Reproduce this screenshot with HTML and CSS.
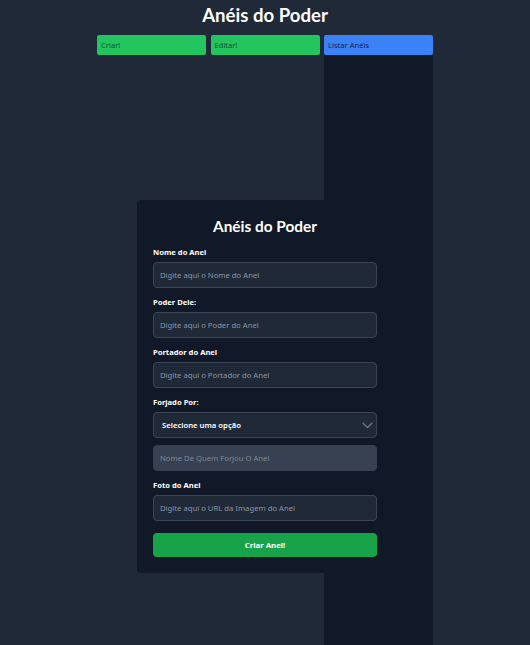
FILE: index.html
```html
<!DOCTYPE html>
<html lang="pt-BR">
<head>
<meta charset="utf-8">
<title>Anéis do Poder</title>
<link rel="stylesheet" href="styles.css">
</head>
<body>
  <h1 class="page-title">Anéis do Poder</h1>
  <div class="layout">
    <button class="tab tab-green">Criar!</button>
    <button class="tab tab-green">Editar!</button>
    <button class="tab tab-blue">Listar Anéis</button>
    <div class="list-panel"></div>
    <form class="card">
      <h2 class="card-title">Anéis do Poder</h2>
      <div class="field">
        <label class="label">Nome do Anel</label>
        <input class="input" type="text" placeholder="Digite aqui o Nome do Anel">
      </div>
      <div class="field">
        <label class="label">Poder Dele:</label>
        <input class="input" type="text" placeholder="Digite aqui o Poder do Anel">
      </div>
      <div class="field">
        <label class="label">Portador do Anel</label>
        <input class="input" type="text" placeholder="Digite aqui o Portador do Anel">
      </div>
      <div class="field field-select">
        <label class="label">Forjado Por:</label>
        <div class="select">
          <span>Selecione uma opção</span>
          <svg class="chevron" width="11" height="7" viewBox="0 0 11 7"><path d="M1 1.2 L5.5 5.5 L10 1.2" fill="none" stroke="#6b7280" stroke-width="1.5" stroke-linecap="round" stroke-linejoin="round"/></svg>
        </div>
      </div>
      <input class="input input-disabled" type="text" placeholder="Nome De Quem Forjou O Anel" disabled>
      <div class="field field-photo">
        <label class="label">Foto do Anel</label>
        <input class="input" type="text" placeholder="Digite aqui o URL da Imagem do Anel">
      </div>
      <button class="submit" type="button">Criar Anel!</button>
    </form>
  </div>
</body>
</html>
```
FILE: styles.css
```css
* { box-sizing: border-box; }
html, body { margin: 0; padding: 0; }
body {
  background: #1f2937;
  font-family: "Noto Sans", "Open Sans", sans-serif;
  color: #ffffff;
  min-height: 100vh;
  overflow: hidden;
}
.page-title {
  margin: 0;
  font-family: Lato, "Noto Sans", sans-serif;
  font-size: 18.6px;
  line-height: 30px;
  font-weight: 700;
  text-align: center;
}
.layout {
  width: 336px;
  margin: 5px auto 0;
  display: grid;
  grid-template-columns: repeat(3, 1fr);
  grid-template-rows: 20px auto;
  column-gap: 4.5px;
}
.tab {
  border: none;
  border-radius: 2px;
  height: 20px;
  padding: 0 4px;
  text-align: left;
  font-family: inherit;
  font-size: 7.6px;
  cursor: pointer;
}
.tab-green { background: #22c55e; color: #14532d; }
.tab-blue { background: #3b82f6; color: #172554; }
.list-panel {
  grid-column: 3;
  grid-row: 2;
  background: #111827;
  height: calc(100vh - 55px);
  margin-left: -0.5px;
}
.card {
  grid-column: 1 / 4;
  grid-row: 2;
  align-self: start;
  justify-self: center;
  width: 256px;
  margin-top: 145px;
  background: #111827;
  border-radius: 4px;
  padding: 14px 16px 16px;
  display: flex;
  flex-direction: column;
  position: relative;
  z-index: 1;
}
.card-title {
  margin: 0 0 8px;
  font-family: Lato, "Noto Sans", sans-serif;
  font-size: 15.4px;
  line-height: 24px;
  font-weight: 700;
  text-align: center;
}
.field {
  display: flex;
  flex-direction: column;
  gap: 4px;
  margin-bottom: 8px;
}
.label {
  font-size: 7.6px;
  line-height: 12px;
  font-weight: 700;
  color: #ffffff;
}
.input, .select {
  height: 26px;
  width: 100%;
  background: #1f2937;
  border: 1px solid #3b4556;
  border-radius: 4px;
  padding: 0 6px;
  font-family: inherit;
  font-size: 7.7px;
  color: #ffffff;
  outline: none;
}
.input::placeholder { color: #8a96a8; opacity: 1; }
.select {
  display: flex;
  align-items: center;
  justify-content: space-between;
  padding: 0 3px 0 8px;
  font-weight: 600;
}
.chevron { display: block; }
.field-select { margin-bottom: 7px; }
.input-disabled {
  background: #374151;
  border-color: #374151;
  margin-bottom: 8px;
}
.input-disabled::placeholder { color: #7f8896; }
.field-photo { margin-bottom: 12px; }
.submit {
  height: 24px;
  border: none;
  border-radius: 4px;
  background: #16a34a;
  color: #ffffff;
  font-family: inherit;
  font-size: 7.8px;
  font-weight: 700;
  cursor: pointer;
}
```
